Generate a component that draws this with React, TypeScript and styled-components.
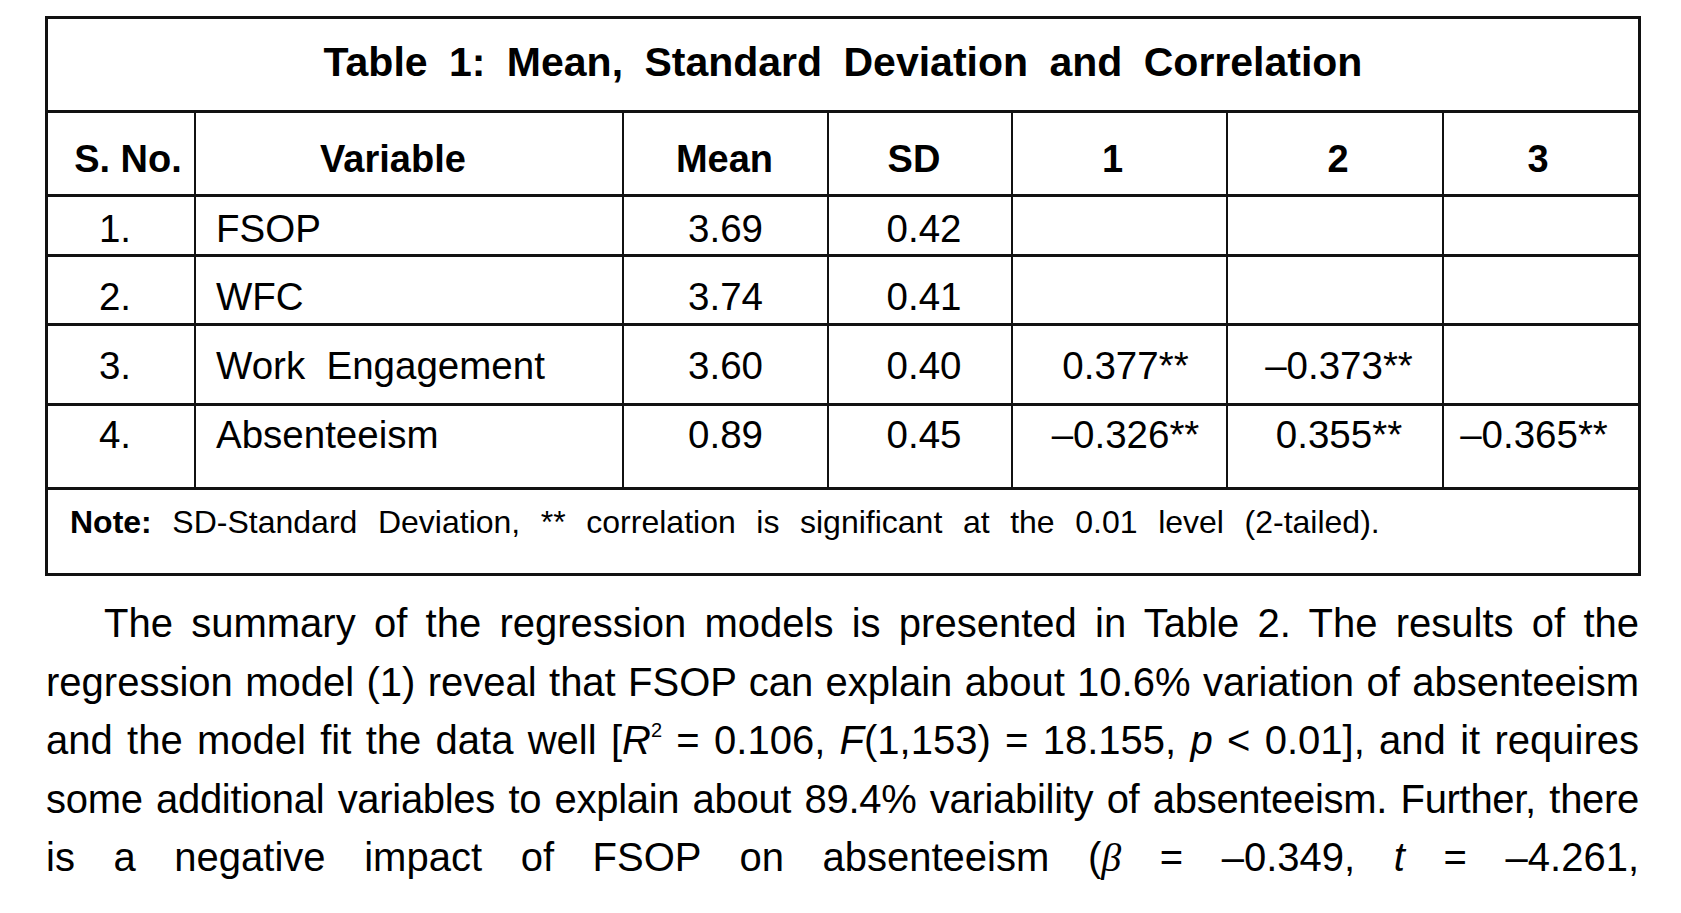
import React from "react";
import styled, { createGlobalStyle } from "styled-components";

const GlobalStyle = createGlobalStyle`
  html, body {
    margin: 0;
    padding: 0;
    background: #fff;
  }
  body {
    font-family: "Liberation Sans", Arial, sans-serif;
    color: #000;
  }
`;

const Page = styled.div`
  padding: 16px 0 0 45px;
  width: 1681px;
  height: 913px;
  box-sizing: border-box;
  overflow: hidden;
`;

const Grid = styled.div`
  display: grid;
  grid-template-columns: 146px 426px 203px 182px 213px 214px 194px;
  grid-template-rows: 91px 81px 57px 66px 77px 81px 83px;
  column-gap: 2px;
  row-gap: 3px;
  padding: 3px;
  width: max-content;
  background: #111;
`;

// $dx nudges centred text sideways, as the typesetter did in the original
const Cell = styled.div<{ $left?: boolean; $pad: number; $bold?: boolean; $dx?: number }>`
  background: #fff;
  box-sizing: border-box;
  padding-top: ${(p) => p.$pad}px;
  padding-left: ${(p) => (p.$left ? 20 : Math.max((p.$dx ?? 0) * 2, 0))}px;
  padding-right: ${(p) => (p.$left ? 0 : Math.max(-(p.$dx ?? 0) * 2, 0))}px;
  text-align: ${(p) => (p.$left ? "left" : "center")};
  font-size: ${(p) => (p.$bold ? "38px" : "38.5px")};
  font-weight: ${(p) => (p.$bold ? 700 : 400)};
  line-height: 1.15;
  white-space: pre;
`;

const TitleCell = styled.div`
  grid-column: 1 / -1;
  background: #fff;
  padding-top: 20px;
  text-align: center;
  font-size: 41px;
  font-weight: 700;
  line-height: 1.15;
  word-spacing: 10px;
`;

const NoteCell = styled.div`
  grid-column: 1 / -1;
  background: #fff;
  padding: 14px 0 0 22px;
  font-size: 32px;
  line-height: 1.15;
  word-spacing: 11.7px;

  strong {
    font-weight: 700;
  }
`;

const Paragraph = styled.div`
  width: 1593px;
  margin: 18px 0 0 1px;
  font-size: 40px;
  line-height: 58.5px;
`;

const Line = styled.span<{ $indent?: number; $tight?: boolean }>`
  display: block;
  text-align: justify;
  text-align-last: justify;
  text-indent: ${(p) => p.$indent ?? 0}px;
  letter-spacing: ${(p) => (p.$tight ? "-0.3px" : "0")};
`;

const Sup = styled.sup`
  font-size: 0.5em;
  line-height: 0;
  vertical-align: 0.85em;
`;

const Greek = styled.i`
  font-family: "Liberation Serif", "Times New Roman", serif;
`;

type Row = {
  no: string;
  name: string;
  mean: string;
  sd: string;
  c: [string, string, string];
  pad: number;
};

const rows: Row[] = [
  { no: "1.", name: "FSOP", mean: "3.69", sd: "0.42", c: ["", "", ""], pad: 10 },
  { no: "2.", name: "WFC", mean: "3.74", sd: "0.41", c: ["", "", ""], pad: 18 },
  {
    no: "3.",
    name: "Work  Engagement",
    mean: "3.60",
    sd: "0.40",
    c: ["0.377**", "–0.373**", ""],
    pad: 18,
  },
  {
    no: "4.",
    name: "Absenteeism",
    mean: "0.89",
    sd: "0.45",
    c: ["–0.326**", "0.355**", "–0.365**"],
    pad: 7,
  },
];

const headers: { label: string; dx: number }[] = [
  { label: "S. No.", dx: 7 },
  { label: "Variable", dx: -16 },
  { label: "Mean", dx: -1 },
  { label: "SD", dx: -6 },
  { label: "1", dx: -7 },
  { label: "2", dx: 3 },
  { label: "3", dx: -3 },
];

const corrShift = [6, 4, -7];

export default function App() {
  return (
    <Page>
      <GlobalStyle />
      <Grid>
        <TitleCell>Table 1: Mean, Standard Deviation and Correlation</TitleCell>
        {headers.map((h) => (
          <Cell key={h.label} $bold $pad={25} $dx={h.dx}>
            {h.label}
          </Cell>
        ))}
        {rows.map((r) => (
          <React.Fragment key={r.no}>
            <Cell $pad={r.pad} $dx={-6}>
              {r.no}
            </Cell>
            <Cell $pad={r.pad} $left>
              {r.name}
            </Cell>
            <Cell $pad={r.pad}>{r.mean}</Cell>
            <Cell $pad={r.pad} $dx={4}>
              {r.sd}
            </Cell>
            {r.c.map((v, i) => (
              <Cell key={i} $pad={r.pad} $dx={corrShift[i]}>
                {v}
              </Cell>
            ))}
          </React.Fragment>
        ))}
        <NoteCell>
          <strong>Note:</strong> SD-Standard Deviation, ** correlation is
          significant at the 0.01 level (2-tailed).
        </NoteCell>
      </Grid>
      <Paragraph>
        <Line $indent={58}>
          The summary of the regression models is presented in Table 2. The
          results of the
        </Line>
        <Line>
          regression model (1) reveal that FSOP can explain about 10.6%
          variation of absenteeism
        </Line>
        <Line>
          and the model fit the data well [<i>R</i>
          <Sup>2</Sup> = 0.106, <i>F</i>(1,153) = 18.155, <i>p</i> &lt; 0.01],
          and it requires
        </Line>
        <Line $tight>
          some additional variables to explain about 89.4% variability of
          absenteeism. Further, there
        </Line>
        <Line>
          is a negative impact of FSOP on absenteeism (<Greek>β</Greek> =
          –0.349, <i>t</i> = –4.261,
        </Line>
      </Paragraph>
    </Page>
  );
}
